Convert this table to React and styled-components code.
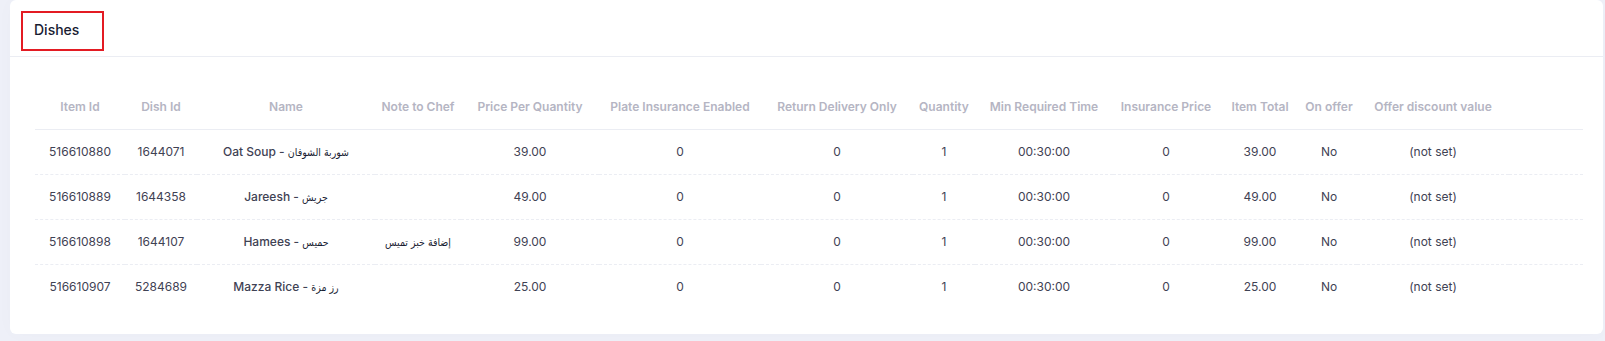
import React from 'react';
import styled, { createGlobalStyle } from 'styled-components';

const GlobalStyle = createGlobalStyle`
  html, body {
    margin: 0;
    padding: 0;
    background: #eef0f8;
    font-family: Inter, 'DejaVu Sans', sans-serif;
  }
`;

const Page = styled.div`
  padding: 0 2px 8px 10px;
`;

const Card = styled.div`
  background: #ffffff;
  border-radius: 6px;
  box-shadow: 0 0 20px 0 rgba(76, 87, 125, 0.02);
`;

const CardHeader = styled.div`
  height: 57px;
  box-sizing: border-box;
  padding: 11px 11px 0;
  border-bottom: 1px solid #ebedf3;
`;

const TitleBox = styled.div`
  width: 83px;
  height: 40px;
  box-sizing: border-box;
  border: 2.5px solid #e31b23;
  display: flex;
  align-items: center;
  padding: 0 0 4px 11px;
`;

const Title = styled.h3`
  margin: 0;
  font-size: 14px;
  font-weight: 500;
  color: #181c32;
`;

const CardBody = styled.div`
  padding: 25px 20px 25px 25px;
`;

const Table = styled.table`
  width: 100%;
  border-collapse: collapse;
  table-layout: fixed;
`;

const Th = styled.th`
  height: 47px;
  box-sizing: border-box;
  padding: 2px 0 0;
  text-align: center;
  vertical-align: middle;
  font-size: 12px;
  font-weight: 600;
  color: #b5b5c3;
  white-space: nowrap;
  border-bottom: 1px solid #ebedf3;
`;

const Row = styled.tr`
  & + & td {
    border-top: 1px dashed #ebedf3;
  }
`;

const Td = styled.td`
  height: 44px;
  padding: 0;
  text-align: center;
  vertical-align: middle;
  font-size: 12px;
  font-weight: ${(p) => (p.$strong ? 500 : 400)};
  color: #3f4254;
  white-space: nowrap;
`;

const Arabic = styled.span`
  font-family: 'DejaVu Sans Condensed', 'DejaVu Sans', sans-serif;
  font-size: 10.5px;
  font-weight: 400;
  color: #181c32;
`;

const widths = [90, 72, 178, 86, 138, 162, 152, 62, 138, 106, 82, 56, 152, 74];

const headers = [
  'Item Id',
  'Dish Id',
  'Name',
  'Note to Chef',
  'Price Per Quantity',
  'Plate Insurance Enabled',
  'Return Delivery Only',
  'Quantity',
  'Min Required Time',
  'Insurance Price',
  'Item Total',
  'On offer',
  'Offer discount value',
  '',
];

const rows = [
  { item: '516610880', dish: '1644071', en: 'Oat Soup', ar: 'شوربة الشوفان', note: '', price: '39.00' },
  { item: '516610889', dish: '1644358', en: 'Jareesh', ar: 'جريش', note: '', price: '49.00' },
  { item: '516610898', dish: '1644107', en: 'Hamees', ar: 'حميس', note: 'إضافة خبز تميس', price: '99.00' },
  { item: '516610907', dish: '5284689', en: 'Mazza Rice', ar: 'رز مزة', note: '', price: '25.00' },
];

export default function App() {
  return (
    <>
      <GlobalStyle />
      <Page>
        <Card>
          <CardHeader>
            <TitleBox>
              <Title>Dishes</Title>
            </TitleBox>
          </CardHeader>
          <CardBody>
            <Table>
              <colgroup>
                {widths.map((w, i) => (
                  <col key={i} style={{ width: w }} />
                ))}
              </colgroup>
              <thead>
                <tr>
                  {headers.map((h, i) => (
                    <Th key={i}>{h}</Th>
                  ))}
                </tr>
              </thead>
              <tbody>
                {rows.map((r) => (
                  <Row key={r.item}>
                    <Td>{r.item}</Td>
                    <Td>{r.dish}</Td>
                    <Td $strong>
                      {r.en} - <Arabic>{r.ar}</Arabic>
                    </Td>
                    <Td>{r.note && <Arabic>{r.note}</Arabic>}</Td>
                    <Td>{r.price}</Td>
                    <Td>0</Td>
                    <Td>0</Td>
                    <Td>1</Td>
                    <Td>00:30:00</Td>
                    <Td>0</Td>
                    <Td>{r.price}</Td>
                    <Td>No</Td>
                    <Td>(not set)</Td>
                    <Td />
                  </Row>
                ))}
              </tbody>
            </Table>
          </CardBody>
        </Card>
      </Page>
    </>
  );
}
